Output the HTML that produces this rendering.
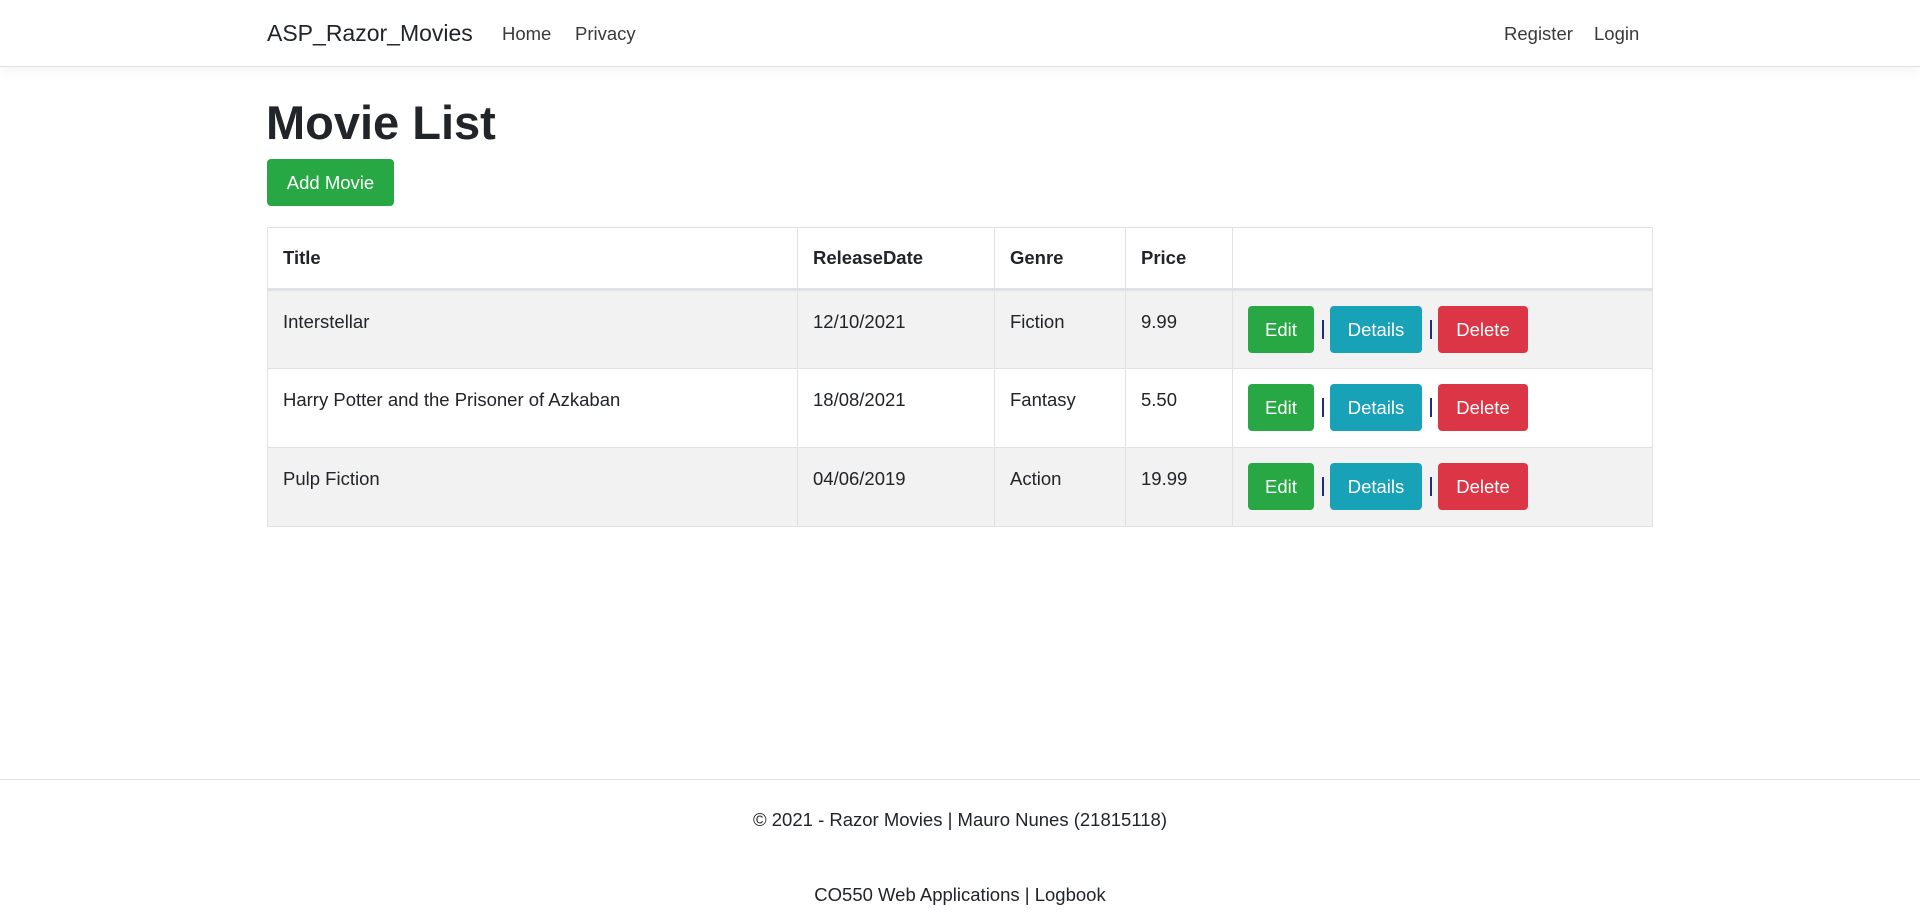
<!DOCTYPE html>
<html><head><meta charset="utf-8"><style>
*{box-sizing:border-box;margin:0;padding:0}
body{width:1920px;height:922px;overflow:hidden;background:#fff;font-family:"Liberation Sans",Arial,sans-serif;color:#212529;font-size:18.5px;position:relative}
.nav{position:absolute;left:0;top:0;width:1920px;height:67px;border-bottom:1px solid #dee2e6;box-shadow:0 4px 12px rgba(0,0,0,.05)}
.a{position:absolute;top:0;line-height:67px;color:#3a3a3a;font-size:18.5px}
.brand{font-size:23px;color:#212529}
h1{position:absolute;left:266px;top:93px;font-size:47px;font-weight:bold;line-height:60px;color:#212529}
.btn{position:absolute;color:#fff;border-radius:4px;text-align:center;font-size:18.5px}
table{position:absolute;left:267px;top:227px;width:1386px;border-collapse:collapse}
td,th{border:1px solid #dfe1e5;text-align:left;padding:0 15px;vertical-align:top}
th{height:62px;line-height:59px;font-weight:bold;border-bottom:3px solid #dee2e6}
td{height:79px;padding-top:20px;position:relative}
tr.s td{background:#f2f2f2}
.bt{position:absolute;top:15px;height:47px;line-height:47px;border-radius:4px;color:#fff;text-align:center}
.sep{position:absolute;top:29px;width:2px;height:19px;background:#1f2d80}
.foot{position:absolute;left:0;top:779px;width:1920px;border-top:1px solid #e2e2e2}
.ft{position:absolute;left:0;width:1920px;text-align:center;font-size:18.5px}
</style></head><body>
<div class="nav">
<span class="a brand" style="left:267px">ASP_Razor_Movies</span>
<span class="a" style="left:502px">Home</span>
<span class="a" style="left:575px">Privacy</span>
<span class="a" style="left:1504px">Register</span>
<span class="a" style="left:1594px">Login</span>
</div>
<h1>Movie List</h1>
<div class="btn" style="left:267px;top:159px;width:127px;height:47px;line-height:47px;background:#28a745">Add Movie</div>
<table>
<colgroup><col style="width:530px"><col style="width:197px"><col style="width:131px"><col style="width:107px"><col></colgroup>
<tr><th>Title</th><th>ReleaseDate</th><th>Genre</th><th>Price</th><th></th></tr>
<tr class="s"><td>Interstellar</td><td>12/10/2021</td><td>Fiction</td><td>9.99</td><td><div class="bt" style="left:15px;width:66px;background:#28a745">Edit</div><div class="sep" style="left:89px"></div><div class="bt" style="left:97px;width:92px;background:#17a2b8">Details</div><div class="sep" style="left:197px"></div><div class="bt" style="left:205px;width:90px;background:#dc3545">Delete</div></td></tr>
<tr><td>Harry Potter and the Prisoner of Azkaban</td><td>18/08/2021</td><td>Fantasy</td><td>5.50</td><td><div class="bt" style="left:15px;width:66px;background:#28a745">Edit</div><div class="sep" style="left:89px"></div><div class="bt" style="left:97px;width:92px;background:#17a2b8">Details</div><div class="sep" style="left:197px"></div><div class="bt" style="left:205px;width:90px;background:#dc3545">Delete</div></td></tr>
<tr class="s"><td>Pulp Fiction</td><td>04/06/2019</td><td>Action</td><td>19.99</td><td><div class="bt" style="left:15px;width:66px;background:#28a745">Edit</div><div class="sep" style="left:89px"></div><div class="bt" style="left:97px;width:92px;background:#17a2b8">Details</div><div class="sep" style="left:197px"></div><div class="bt" style="left:205px;width:90px;background:#dc3545">Delete</div></td></tr>
</table>
<div class="foot"></div>
<div class="ft" style="top:809px">© 2021 - Razor Movies | Mauro Nunes (21815118)</div>
<div class="ft" style="top:884px">CO550 Web Applications | Logbook</div>
</body></html>
